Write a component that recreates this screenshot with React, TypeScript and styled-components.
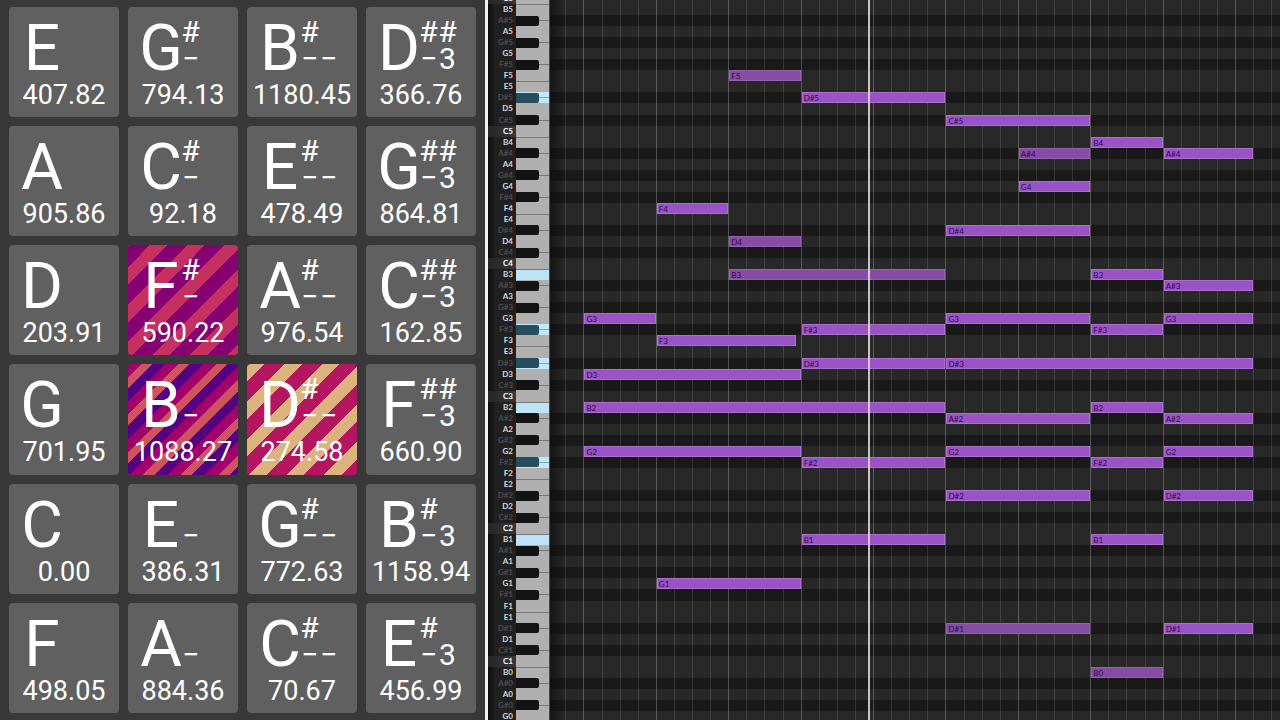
import React from "react";
import styled, { createGlobalStyle, css } from "styled-components";

const GlobalStyle = createGlobalStyle`
  *, *::before, *::after { box-sizing: border-box; }
  body { margin: 0; background: #1c1c1c; font-family: Roboto, "Liberation Sans", sans-serif; }
`;

/* ---------- data ---------- */

type Fill = "plain" | "rose" | "indigo" | "sand";

interface Pad {
  letter: string;
  sharps?: string;
  lower?: string;
  cents: string;
  fill?: Fill;
}

const PADS: Pad[] = [
  { letter: "E", cents: "407.82" },
  { letter: "G", sharps: "#", lower: "−", cents: "794.13" },
  { letter: "B", sharps: "#", lower: "−−", cents: "1180.45" },
  { letter: "D", sharps: "##", lower: "−3", cents: "366.76" },
  { letter: "A", cents: "905.86" },
  { letter: "C", sharps: "#", lower: "−", cents: "92.18" },
  { letter: "E", sharps: "#", lower: "−−", cents: "478.49" },
  { letter: "G", sharps: "##", lower: "−3", cents: "864.81" },
  { letter: "D", cents: "203.91" },
  { letter: "F", sharps: "#", lower: "−", cents: "590.22", fill: "rose" },
  { letter: "A", sharps: "#", lower: "−−", cents: "976.54" },
  { letter: "C", sharps: "##", lower: "−3", cents: "162.85" },
  { letter: "G", cents: "701.95" },
  { letter: "B", lower: "−", cents: "1088.27", fill: "indigo" },
  { letter: "D", sharps: "#", lower: "−−", cents: "274.58", fill: "sand" },
  { letter: "F", sharps: "##", lower: "−3", cents: "660.90" },
  { letter: "C", cents: "0.00" },
  { letter: "E", lower: "−", cents: "386.31" },
  { letter: "G", sharps: "#", lower: "−−", cents: "772.63" },
  { letter: "B", sharps: "#", lower: "−3", cents: "1158.94" },
  { letter: "F", cents: "498.05" },
  { letter: "A", lower: "−", cents: "884.36" },
  { letter: "C", sharps: "#", lower: "−−", cents: "70.67" },
  { letter: "E", sharps: "#", lower: "−3", cents: "456.99" },
];

const NAMES = ["C", "C#", "D", "D#", "E", "F", "F#", "G", "G#", "A", "A#", "B"];
const TOP_PITCH = 72; // C6, counted from C0
const ROW_COUNT = 66;
const PITCHES = Array.from({ length: ROW_COUNT }, (_, i) => TOP_PITCH - i);

const nameOf = (pitch: number) =>
  NAMES[((pitch % 12) + 12) % 12] + Math.floor(pitch / 12);
const pitchOf = (name: string) =>
  NAMES.indexOf(name.slice(0, -1)) + Number(name.slice(-1)) * 12;
const isBlack = (pitch: number) => nameOf(pitch).includes("#");

const LIT = ["D#5", "B3", "F#3", "D#3", "B2", "F#2", "B1"];

/* name, first beat, last beat, quieter note */
const NOTES: [string, number, number, boolean?][] = [
  ["F5", 2, 3, true], ["D#5", 3, 5], ["C#5", 5, 7], ["B4", 7, 8],
  ["A#4", 6, 7, true], ["A#4", 8, 9.25], ["G4", 6, 7], ["F4", 1, 2],
  ["D#4", 5, 7], ["D4", 2, 3, true], ["B3", 2, 5, true], ["B3", 7, 8],
  ["A#3", 8, 9.25], ["G3", 0, 1], ["G3", 5, 7], ["G3", 8, 9.25],
  ["F#3", 3, 5], ["F#3", 7, 8], ["F3", 1, 2.94], ["D#3", 3, 5],
  ["D#3", 5, 9.25], ["D3", 0, 3], ["B2", 0, 5], ["B2", 7, 8],
  ["A#2", 5, 7], ["A#2", 8, 9.25], ["G2", 0, 3], ["G2", 5, 7],
  ["G2", 8, 9.25], ["F#2", 3, 5], ["F#2", 7, 8], ["D#2", 5, 7],
  ["D#2", 8, 9.25], ["B1", 3, 5], ["B1", 7, 8], ["G1", 1, 3],
  ["D#1", 5, 7, true], ["D#1", 8, 9.25], ["B0", 7, 8, true],
];

const VIEW_START = -0.462;
const VIEW_BEATS = 10.083;
const PLAYHEAD = 3.935;
const xOf = (beat: number) => `${((beat - VIEW_START) / VIEW_BEATS) * 100}%`;
const wOf = (beats: number) => `calc(${(beats / VIEW_BEATS) * 100}% - 1px)`;
const yOf = (pitch: number) => `${((TOP_PITCH - pitch) / ROW_COUNT) * 100}%`;
const GRID = Array.from({ length: 40 }, (_, i) => (i - 1) / 4);

/* ---------- pads ---------- */

const Screen = styled.main`
  display: grid;
  grid-template-columns: minmax(0, 485fr) 3px minmax(0, 792fr);
  grid-template-rows: minmax(0, 1fr);
  height: 100vh;
  overflow: hidden;
`;

const PadGrid = styled.section`
  display: grid;
  grid-template-columns: repeat(4, 1fr);
  grid-template-rows: repeat(6, 1fr);
  gap: 9px;
  padding: 7px 9px;
  background: #383838;
`;

const fills: Record<Fill, ReturnType<typeof css>> = {
  plain: css`background: #606060;`,
  rose: css`
    background: repeating-linear-gradient(135deg, #c4305f 0 1%, #870072 1% 10%, #c4305f 10% 17%);
  `,
  indigo: css`
    background: repeating-linear-gradient(135deg, #a2006b 0 6%, #d05460 6% 11%, #540083 11% 17%);
  `,
  sand: css`
    background: repeating-linear-gradient(135deg, #dcb27e 0 8%, #b3155f 8% 17%);
  `,
};

const PadButton = styled.button<{ $fill: Fill }>`
  display: flex;
  flex-direction: column;
  align-items: stretch;
  justify-content: flex-start;
  min-width: 0;
  padding: 9px 0 0;
  border: 0;
  border-radius: 4px;
  color: #fff;
  font-family: inherit;
  cursor: pointer;
  ${(p) => fills[p.$fill]}
`;

const PadHead = styled.span`
  display: flex;
  height: 65px;
  padding-left: 13px;
`;

const Letter = styled.span`
  width: 40px;
  display: flex;
  justify-content: center;
  font-size: 64px;
  line-height: 66px;
`;

const Accidentals = styled.span`
  display: grid;
  grid-template-rows: 27px 27px;
  padding-top: 2px;
`;

const AccidentalRow = styled.span`
  display: grid;
  grid-template-columns: 19px 19px;
  justify-items: center;
  font-size: 30px;
  line-height: 27px;
`;

const Cents = styled.span`
  display: flex;
  justify-content: center;
  font-size: 27px;
  line-height: 28px;
`;

const Divider = styled.div`
  background: #f2f2f2;
`;

/* ---------- piano roll ---------- */

const Roll = styled.section`
  display: grid;
  grid-template-columns: 28px 34px minmax(0, 1fr);
  height: calc(100vh + 9px);
  margin-top: -7px;
  background: #1c1c1c;
  font-family: Lato, "Liberation Sans", sans-serif;
`;

const rows = css`
  display: grid;
  grid-template-rows: repeat(${ROW_COUNT}, minmax(0, 1fr));
`;

const Labels = styled.div`
  ${rows}
  background: linear-gradient(90deg, #0c0c0c, #202020 8px);
`;

const Label = styled.span<{ $tone: "root" | "natural" | "sharp" }>`
  display: flex;
  align-items: center;
  justify-content: flex-end;
  padding-right: 3px;
  font-size: 8px;
  line-height: 11px;
  font-weight: 700;
  color: ${(p) => ({ root: "#ffffff", natural: "#d8d8d8", sharp: "#4c4c4c" })[p.$tone]};
  background: ${(p) =>
    p.$tone === "root" ? "linear-gradient(90deg, #262626, #383838)" : "transparent"};
`;

const Keys = styled.div`
  ${rows}
  background: #b0b0b0;
  border-right: 1px solid #4a4a4a;
`;

const WhiteKey = styled.button<{ $lit: boolean; $edge: boolean }>`
  padding: 0;
  border: 0;
  border-top: ${(p) => (p.$edge ? "1px solid #777777" : "0")};
  background: ${(p) => (p.$lit ? "#bce4f6" : "#b0b0b0")};
`;

const BlackKey = styled.button<{ $lit: boolean }>`
  display: grid;
  grid-template-columns: 23px 1fr;
  align-items: center;
  padding: 0;
  border: 0;
  background: ${(p) => (p.$lit ? "#c0e7fa" : "#b0b0b0")};

  &::before {
    content: "";
    height: 10px;
    border-radius: 0 2px 2px 0;
    background: ${(p) => (p.$lit ? "#274c5e" : "#131313")};
  }

  &::after {
    content: "";
    height: 1px;
    background: ${(p) => (p.$lit ? "#7fa6b8" : "#777777")};
  }
`;

const Canvas = styled.div`
  ${rows}
  position: relative;
  overflow: hidden;

  &::after {
    content: "";
    position: absolute;
    inset: 0 auto 0 0;
    width: 16px;
    background: linear-gradient(90deg, rgba(10, 10, 10, 0.6), rgba(10, 10, 10, 0));
  }
`;

const Lane = styled.div<{ $dark: boolean }>`
  background: ${(p) => (p.$dark ? "#191919" : "#282828")};
`;

const GridLine = styled.i<{ $major: boolean }>`
  position: absolute;
  top: 0;
  bottom: 0;
  width: 1px;
  background: ${(p) => (p.$major ? "rgba(255,255,255,0.24)" : "rgba(255,255,255,0.12)")};
`;

const Note = styled.div<{ $soft: boolean }>`
  position: absolute;
  height: 11px;
  margin-left: 1px;
  padding-left: 1px;
  border: 1px solid ${(p) => (p.$soft ? "#9560ad" : "#aa70cc")};
  background: ${(p) => (p.$soft ? "#864ca3" : "#9a53c6")};
  color: #2c0a46;
  font-size: 8px;
  line-height: 10px;
`;

const Playhead = styled.div`
  position: absolute;
  top: 0;
  bottom: 0;
  width: 2px;
  background: rgba(225, 225, 225, 0.85);
`;

function PadTile({ pad }: { pad: Pad }) {
  return (
    <PadButton type="button" $fill={pad.fill ?? "plain"}>
      <PadHead>
        <Letter>{pad.letter}</Letter>
        <Accidentals>
          <AccidentalRow>
            {[...(pad.sharps ?? "")].map((c, i) => <span key={i}>{c}</span>)}
          </AccidentalRow>
          <AccidentalRow>
            {[...(pad.lower ?? "")].map((c, i) => <span key={i}>{c}</span>)}
          </AccidentalRow>
        </Accidentals>
      </PadHead>
      <Cents>{pad.cents}</Cents>
    </PadButton>
  );
}

function toneOf(pitch: number) {
  if (isBlack(pitch)) return "sharp" as const;
  return pitch % 12 === 0 ? ("root" as const) : ("natural" as const);
}

export default function App() {
  return (
    <>
      <GlobalStyle />
      <Screen>
        <PadGrid>
          {PADS.map((pad) => <PadTile key={pad.cents} pad={pad} />)}
        </PadGrid>
        <Divider />
        <Roll>
          <Labels>
            {PITCHES.map((p) => <Label key={p} $tone={toneOf(p)}>{nameOf(p)}</Label>)}
          </Labels>
          <Keys>
            {PITCHES.map((p) => {
              const name = nameOf(p);
              const lit = LIT.includes(name);
              return isBlack(p) ? (
                <BlackKey key={p} type="button" aria-label={name} $lit={lit} />
              ) : (
                <WhiteKey
                  key={p}
                  type="button"
                  aria-label={name}
                  $lit={lit}
                  $edge={name[0] === "E" || name[0] === "B"}
                />
              );
            })}
          </Keys>
          <Canvas>
            {PITCHES.map((p) => <Lane key={p} $dark={isBlack(p)} />)}
            {GRID.map((beat) => (
              <GridLine key={beat} $major={Number.isInteger(beat)} style={{ left: xOf(beat) }} />
            ))}
            {NOTES.map(([name, start, end, soft]) => (
              <Note
                key={`${name}-${start}`}
                $soft={Boolean(soft)}
                style={{ left: xOf(start), width: wOf(end - start), top: yOf(pitchOf(name)) }}
              >
                {name}
              </Note>
            ))}
            <Playhead style={{ left: xOf(PLAYHEAD) }} />
          </Canvas>
        </Roll>
      </Screen>
    </>
  );
}
